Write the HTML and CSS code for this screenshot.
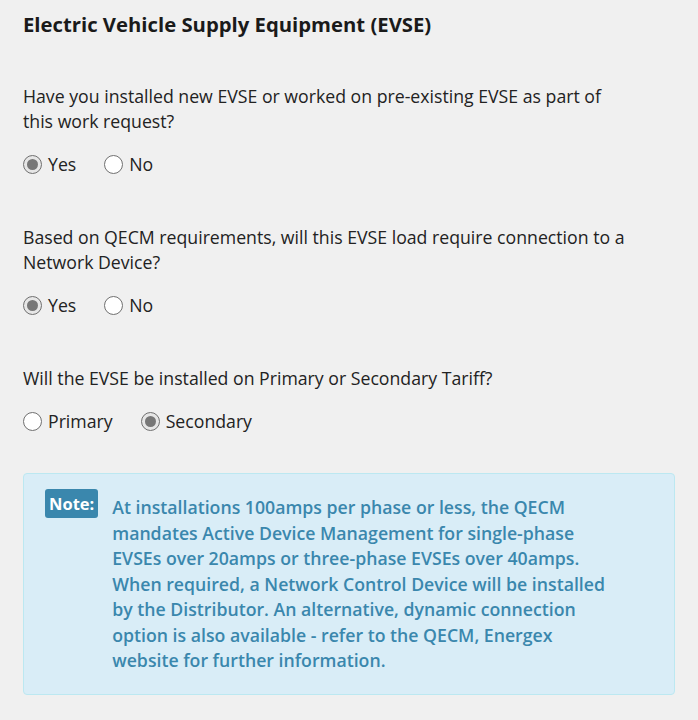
FILE: index.html
```html
<!DOCTYPE html>
<html lang="en">

<head>
    <meta charset="UTF-8">
    <meta name="viewport" content="width=device-width, initial-scale=1.0">
    <title>EVSE</title>
    <link rel="stylesheet" href="styles.css">
</head>

<body>
    <div class="evse_section">
        <h2 class="evse_title">Electric Vehicle Supply Equipment (EVSE)</h2>

        <div class="question">
            <p class="question_text">Have you installed new EVSE or worked on pre-existing EVSE as part of<br>this work request?</p>
            <div class="radio_group">
                <label class="radio_option"><input type="radio" name="q1" checked><span class="radio_mark"></span>Yes</label>
                <label class="radio_option"><input type="radio" name="q1"><span class="radio_mark"></span>No</label>
            </div>
        </div>

        <div class="question">
            <p class="question_text">Based on QECM requirements, will this EVSE load require connection to a<br>Network Device?</p>
            <div class="radio_group">
                <label class="radio_option"><input type="radio" name="q2" checked><span class="radio_mark"></span>Yes</label>
                <label class="radio_option"><input type="radio" name="q2"><span class="radio_mark"></span>No</label>
            </div>
        </div>

        <div class="question">
            <p class="question_text">Will the EVSE be installed on Primary or Secondary Tariff?</p>
            <div class="radio_group">
                <label class="radio_option"><input type="radio" name="q3"><span class="radio_mark"></span>Primary</label>
                <label class="radio_option"><input type="radio" name="q3" checked><span class="radio_mark"></span>Secondary</label>
            </div>
        </div>

        <div class="note_box">
            <span class="note_label">Note:</span>
            <p class="note_text">At installations 100amps per phase or less, the QECM<br>mandates Active Device Management for single-phase<br>EVSEs over 20amps or three-phase EVSEs over 40amps.<br>When required, a Network Control Device will be installed<br>by the Distributor. An alternative, dynamic connection<br>option is also available - refer to the QECM, Energex<br>website for further information.</p>
        </div>
    </div>
</body>

</html>
```

FILE: styles.css
```css
body {
    margin: 0;
    background-color: #f0f0f0;
    font-family: "Open Sans", sans-serif;
    font-size: 17.7px;
    color: #222;
}

.evse_section {
    padding: 10px 23px 28px 23px;
}

.evse_title {
    margin: 0;
    font-size: 20.3px;
    font-weight: bold;
    line-height: 28px;
    color: #1a1a1a;
}

.question {
    margin-top: 46px;
}

.question_text {
    margin: 0;
    line-height: 25px;
}

.radio_group {
    display: flex;
    gap: 28px;
    margin-top: 18px;
    padding-bottom: 3px;
}

.radio_option {
    display: flex;
    align-items: center;
    gap: 6px;
    line-height: 24px;
}

.radio_option input {
    display: none;
}

.radio_mark {
    width: 17px;
    height: 17px;
    border: 1px solid #707070;
    border-radius: 50%;
    background-color: #fff;
    box-sizing: content-box;
    display: flex;
    align-items: center;
    justify-content: center;
}

.radio_option input:checked + .radio_mark {
    background-color: #e6e6e6;
}

.radio_option input:checked + .radio_mark::after {
    content: "";
    width: 11px;
    height: 11px;
    border-radius: 50%;
    background-color: #777;
}

.note_box {
    margin-top: 37px;
    display: flex;
    align-items: flex-start;
    gap: 14px;
    padding: 15px 20px 20px 21px;
    background-color: #d9edf7;
    border: 1px solid #bce8f1;
    border-radius: 4px;
}

.note_label {
    background-color: #3a87ad;
    color: #fff;
    font-weight: bold;
    font-size: 16.5px;
    padding: 2px 4px 2px 4px;
    border-radius: 3px;
    line-height: 25px;
    flex-shrink: 0;
}

.note_text {
    margin: 6px 0 0 0;
    color: #3a87ad;
    font-weight: 600;
    line-height: 25.5px;
}
```
